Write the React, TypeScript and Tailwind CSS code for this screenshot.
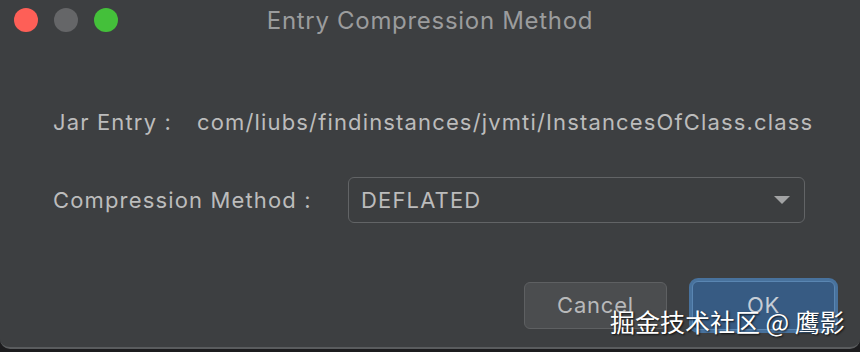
export default function App() {
  return (
    <div className="relative h-[352px] w-[860px] overflow-hidden bg-[#1c1c1e]">
      <div className="flex h-[349px] w-full flex-col rounded-b-[10px] border-b-[2px] border-[#5a5c5e] bg-[#3d3f41] font-['Inter',sans-serif] text-[#bcbcbc]">
        {/* title bar */}
        <div className="relative flex h-[41px] items-center justify-center">
          <div className="absolute left-[14px] top-[8px] flex gap-[16px]">
            <span className="h-[24px] w-[24px] rounded-full bg-[#fe5f57]" />
            <span className="h-[24px] w-[24px] rounded-full bg-[#656668]" />
            <span className="h-[24px] w-[24px] rounded-full bg-[#44c03a]" />
          </div>
          <span className="text-[24px] tracking-[0.7px] text-[#9b9c9d]">Entry Compression Method</span>
        </div>

        <div className="flex flex-col pl-[53px] pt-[63px]">
          <div className="flex h-[36px] items-center text-[22px] tracking-[1.15px]">
            <span className="w-[144px]">Jar Entry :</span>
            <span>com/liubs/findinstances/jvmti/InstancesOfClass.class</span>
          </div>

          <div className="mt-[37px] flex items-center text-[22px] tracking-[1.15px]">
            <span className="w-[295px]">Compression Method :</span>
            <div className="flex h-[46px] w-[457px] items-center justify-between rounded-[6px] border-[1.5px] border-[#626466] bg-[#3c3e40] pl-[12px] pr-[12px]">
              <span>DEFLATED</span>
              <svg width="20" height="12" viewBox="0 0 20 12">
                <path d="M2 2 L18 2 L10 10 Z" fill="#a2a3a4" />
              </svg>
            </div>
          </div>
        </div>

        <div className="mt-auto flex items-center justify-end gap-[22px] pb-[14px] pr-[22px]">
          <button className="flex h-[47px] w-[143px] items-center justify-center rounded-[6px] border border-[#5e6062] bg-[#4b4d4f] text-[22px] tracking-[0.8px] text-[#b8b9ba]">
            Cancel
          </button>
          <div className="rounded-[9px] bg-[#48729d] p-[3px]">
            <button className="flex h-[49px] w-[143px] items-center justify-center rounded-[6px] border border-[#5a86b2] bg-[#375b83] text-[22px] tracking-[0.8px] text-[#c6cdd6]">
              OK
            </button>
          </div>
        </div>
      </div>

      <span className="absolute left-[610px] top-[309px] font-['Noto_Sans_CJK_SC',sans-serif] text-[25px] leading-none text-white [text-shadow:1px_1px_2px_rgba(0,0,0,0.8)]">
        掘金技术社区 @ 鹰影
      </span>
    </div>
  );
}
